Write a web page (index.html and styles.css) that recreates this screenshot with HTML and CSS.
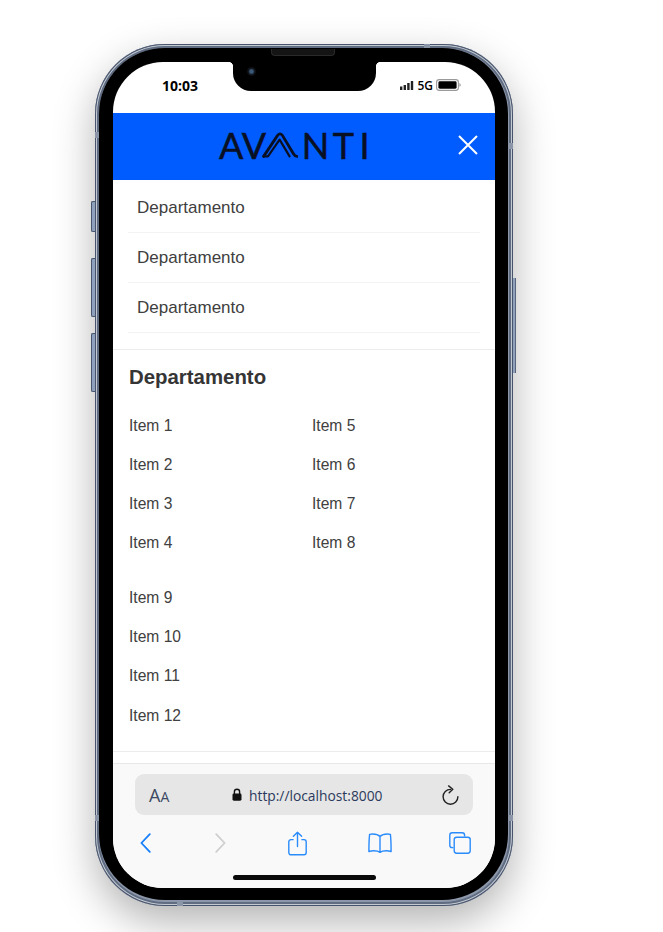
FILE: index.html
```html
<!DOCTYPE html>
<html lang="pt-BR">
<head>
<meta charset="utf-8">
<title>Avanti</title>
<link rel="stylesheet" href="styles.css">
</head>
<body>
<div class="phone">
  <span class="btn btn-mute"></span>
  <span class="btn btn-up"></span>
  <span class="btn btn-down"></span>
  <span class="btn-power"></span>
  <span class="tick tick-top-a"></span>
  <span class="tick tick-bot-a"></span>
  <span class="tick tick-left-a"></span>
  <span class="tick tick-left-b"></span>
  <span class="tick tick-right-a"></span>
  <span class="tick tick-right-b"></span>
  <div class="bezel">
    <span class="speaker"></span>
    <div class="screen">
      <div class="notch"><span class="camera"></span></div>
      <div class="status">
        <span class="time">10:03</span>
        <div class="status-right">
          <svg class="signal" width="14" height="9" viewBox="0 0 14 9"><rect x="0" y="5.5" width="2.4" height="3.5" fill="#222"/><rect x="3.6" y="4" width="2.4" height="5" fill="#222"/><rect x="7.2" y="2" width="2.4" height="7" fill="#222"/><rect x="10.8" y="0" width="2.4" height="9" fill="#222"/></svg>
          <span class="net">5G</span>
          <svg class="battery" width="25" height="12" viewBox="0 0 25 12"><rect x="0.6" y="0.6" width="21.8" height="10.8" rx="2.6" fill="none" stroke="#9a9a9a" stroke-width="1.1"/><rect x="2.4" y="2.3" width="18.2" height="7.4" rx="1.4" fill="#000"/><path d="M23.4 4.2c1 .3 1.3 .9 1.3 1.8s-.3 1.5-1.3 1.8z" fill="#9a9a9a"/></svg>
        </div>
      </div>
      <header class="topbar">
        <div class="logo" role="img" aria-label="AVANTI">
          <span class="logo-text">AV</span>
          <svg class="logo-mark" width="36" height="26" viewBox="0 0 36 26"><path d="M1.6 24.4 L15.6 3.4 Q18 0.4 20.4 3.4 L31.6 22 Q33 24.4 35 24.4" fill="none" stroke="#0a1024" stroke-width="2.8" stroke-linecap="round" stroke-linejoin="round"/><path d="M1.6 24.4 H6 L17.6 7.6 L27.6 24.4" fill="none" stroke="#0a1024" stroke-width="2.2" stroke-linecap="round" stroke-linejoin="round"/></svg>
          <span class="logo-text logo-n">N</span><span class="logo-text logo-t">T</span><span class="logo-text logo-i">I</span>
        </div>
        <svg class="close" width="20" height="20" viewBox="0 0 20 20"><path d="M1 1 L19 19 M19 1 L1 19" stroke="#fff" stroke-width="2" fill="none"/></svg>
      </header>
      <main class="content">
        <ul class="dept-list">
          <li class="dept-row">Departamento</li>
          <li class="dept-row">Departamento</li>
          <li class="dept-row">Departamento</li>
        </ul>
        <section class="dept">
          <h2 class="dept-title">Departamento</h2>
          <div class="items">
            <a class="item">Item 1</a><a class="item">Item 5</a>
            <a class="item">Item 2</a><a class="item">Item 6</a>
            <a class="item">Item 3</a><a class="item">Item 7</a>
            <a class="item">Item 4</a><a class="item">Item 8</a>
          </div>
          <div class="items items-more">
            <a class="item item-wide">Item 9</a>
            <a class="item item-wide">Item 10</a>
            <a class="item item-wide">Item 11</a>
            <a class="item item-wide item-last">Item 12</a>
          </div>
        </section>
      </main>
      <footer class="browser">
        <div class="urlbar">
          <span class="aa"><span class="aa-big">A</span><span class="aa-small">A</span></span>
          <div class="address">
            <svg class="lock" width="10" height="13" viewBox="0 0 10 13"><path d="M2.4 6V3.8a2.6 2.6 0 0 1 5.2 0V6" fill="none" stroke="#111" stroke-width="1.4"/><rect x="0.5" y="5.5" width="9" height="7.2" rx="1.4" fill="#111"/></svg>
            <span class="url">http://localhost:8000</span>
          </div>
          <svg class="reload" width="17" height="20" viewBox="0 0 17 20"><path d="M8.5 4.4A7.4 7.4 0 1 0 15.9 11.8" fill="none" stroke="#222" stroke-width="1.4" stroke-linecap="round"/><path d="M6.6 0.9 L10.8 4.2 L7.2 7.8" fill="none" stroke="#222" stroke-width="1.4" stroke-linecap="round" stroke-linejoin="round"/></svg>
        </div>
        <nav class="toolbar">
          <svg width="11" height="20" viewBox="0 0 11 20"><path d="M9.8 1.2 L1.4 10 L9.8 18.8" fill="none" stroke="#147efb" stroke-width="1.8" stroke-linecap="round" stroke-linejoin="round"/></svg>
          <svg width="11" height="20" viewBox="0 0 11 20"><path d="M1.2 1.2 L9.6 10 L1.2 18.8" fill="none" stroke="#cfcfcf" stroke-width="1.8" stroke-linecap="round" stroke-linejoin="round"/></svg>
          <svg class="share" width="19" height="25" viewBox="0 0 19 25"><path d="M5.6 8.6H3A2.2 2.2 0 0 0 .8 10.8v10.8A2.2 2.2 0 0 0 3 23.8h13a2.2 2.2 0 0 0 2.2-2.2V10.8A2.2 2.2 0 0 0 16 8.6h-2.6" fill="none" stroke="#2a8bfb" stroke-width="1.4"/><path d="M9.5 15.6V1.4M5.4 5.2 9.5 1.2l4.1 4" fill="none" stroke="#2a8bfb" stroke-width="1.4" stroke-linecap="round" stroke-linejoin="round"/></svg>
          <svg class="book" width="24" height="20" viewBox="0 0 24 20"><path d="M12 3.4C10.4 1.8 7.8 1 4.6 1 3.2 1 2.2 1.2 1.6 1.4 1.2 5 .9 13 .9 18.6c1.4-.5 3-.8 4.8-.8 2.6 0 4.8 .4 6.3 1.6 1.5-1.2 3.7-1.6 6.3-1.6 1.8 0 3.4 .3 4.8 .8 0-5.6-.3-13.6-.7-17.2-.6-.2-1.6-.4-3-.4-3.2 0-5.8 .8-7.4 2.4zM12 3.4v16" fill="none" stroke="#2a8bfb" stroke-width="1.4" stroke-linejoin="round"/></svg>
          <svg class="tabs" width="22" height="22" viewBox="0 0 22 22"><path d="M4.4 15.6H3.2A2.4 2.4 0 0 1 .8 13.2V3.2A2.4 2.4 0 0 1 3.2 .8h10a2.4 2.4 0 0 1 2.4 2.4v1.2" fill="none" stroke="#2a8bfb" stroke-width="1.4"/><rect x="5.2" y="5.2" width="16" height="16" rx="2.4" fill="none" stroke="#2a8bfb" stroke-width="1.4"/></svg>
        </nav>
        <span class="home-bar"></span>
      </footer>
    </div>
  </div>
</div>
</body>
</html>
```

FILE: styles.css
```css
* { box-sizing: border-box; }

html, body {
  margin: 0;
  height: 100%;
  background: #fff;
  overflow: hidden;
}

body {
  padding: 44px 0 0 95px;
  font-family: "Liberation Sans", Arial, sans-serif;
  color: #404040;
}

.phone {
  position: relative;
  width: 418px;
  height: 862px;
  padding: 4px 5px 6px 4px;
  border-radius: 70px;
  background: #8c97aa;
  box-shadow:
    inset 0 0 0 1px #46536a,
    inset 0 0 0 2px #c4cad4,
    inset 0 0 0 4px #5f6c82,
    0 16px 42px rgba(0, 0, 0, 0.3);
}

.btn {
  position: absolute;
  left: -4px;
  width: 4px;
  background: #8ea0bb;
  border: 1px solid #47566f;
  border-right: 0;
  border-radius: 2px 0 0 2px;
}
.btn-mute { top: 157px; height: 31px; }
.btn-up { top: 214px; height: 59px; }
.btn-down { top: 289px; height: 59px; }

.btn-power {
  position: absolute;
  right: -3px;
  top: 234px;
  width: 3px;
  height: 95px;
  background: #8ea0bb;
  border-right: 1px solid #56647c;
}

.tick {
  position: absolute;
  background: #8a95a8;
}
.tick-top-a { top: 0; left: 329px; width: 6px; height: 4px; }
.tick-bot-a { bottom: 0; left: 82px; width: 6px; height: 5px; }
.tick-left-a { left: 0; top: 88px; width: 5px; height: 6px; }
.tick-left-b { left: 0; top: 771px; width: 5px; height: 6px; }
.tick-right-a { right: 0; top: 99px; width: 6px; height: 6px; }
.tick-right-b { right: 0; top: 771px; width: 6px; height: 6px; }

.bezel {
  position: relative;
  height: 100%;
  padding: 14px 13px 12px 14px;
  border-radius: 66px;
  background: #000;
}

.speaker {
  position: absolute;
  top: 1px;
  left: 172px;
  width: 64px;
  height: 7px;
  border-radius: 0 0 4px 4px;
  background: #141414;
  border: 1px solid #2a2a2a;
  border-top: 0;
}

.screen {
  position: relative;
  display: flex;
  flex-direction: column;
  height: 100%;
  overflow: hidden;
  border-radius: 50px;
  background: #fff;
}

.notch {
  position: absolute;
  top: 0;
  left: 120px;
  width: 143px;
  height: 29px;
  border-radius: 0 0 18px 18px;
  background: #000;
}

.notch::before,
.notch::after {
  content: "";
  position: absolute;
  top: 0;
  width: 5px;
  height: 5px;
}
.notch::before {
  left: -5px;
  background: radial-gradient(circle at 0 100%, transparent 5px, #000 5.5px);
}
.notch::after {
  right: -5px;
  background: radial-gradient(circle at 100% 100%, transparent 5px, #000 5.5px);
}

.camera {
  position: absolute;
  top: 5px;
  left: 14px;
  width: 9px;
  height: 9px;
  border-radius: 50%;
  background: radial-gradient(circle, #3c5a78 0 25%, #10141c 50%, #050505 100%);
}

.status {
  display: flex;
  justify-content: space-between;
  align-items: center;
  flex: 0 0 51px;
  padding: 0 34px 5px 49px;
}

.time {
  font-family: "Open Sans", sans-serif;
  font-size: 14px;
  font-weight: 700;
  color: #000;
}

.status-right {
  display: flex;
  align-items: center;
  gap: 3px;
}

.net {
  font-family: "Open Sans", sans-serif;
  font-size: 12px;
  font-weight: 600;
  color: #000;
}

.topbar {
  position: relative;
  display: flex;
  justify-content: center;
  align-items: center;
  flex: 0 0 67px;
  background: #005cff;
}

.logo {
  display: flex;
  align-items: center;
  height: 26px;
  margin: -4px 0 0 -19px;
}

.logo-text {
  font-family: Lato, sans-serif;
  font-size: 36px;
  line-height: 26px;
  color: #0a1024;
  letter-spacing: 0.5px;
  -webkit-text-stroke: 0.5px #0a1024;
}

.logo-mark { margin-left: -5px; margin-top: 1px; }
.logo-n { margin-left: 4px; }
.logo-t { margin-left: 3px; }
.logo-i { margin-left: 5px; }

.close {
  position: absolute;
  right: 17px;
  top: 22px;
}

.content {
  flex: 1;
  min-height: 0;
}

.dept-list {
  list-style: none;
  margin: 0;
  padding: 3px 15px 16px;
  border-bottom: 1px solid #ececec;
}

.dept-row {
  height: 50px;
  padding: 0 0 0 9px;
  border-bottom: 1px solid #f3f3f3;
  font-size: 17px;
  line-height: 50px;
}

.dept {
  padding: 0 16px;
  height: 402px;
  border-bottom: 1px solid #ececec;
}

.dept-title {
  margin: 0;
  padding-top: 15px;
  height: 56px;
  font-size: 20.4px;
  line-height: 24px;
  font-weight: 700;
  color: #353535;
}

.items {
  display: grid;
  grid-template-columns: 183px 183px;
}

.items-more { margin-top: 16px; }

.item {
  height: 39px;
  font-size: 15.6px;
  line-height: 39px;
  color: #404040;
}

.item-wide { grid-column: 1 / -1; }
.item-last { line-height: 41px; }

.browser {
  position: relative;
  flex: 0 0 125px;
  padding: 10px 22px 0;
  border-top: 1px solid #e8e8e8;
  background: #f9f9f9;
}

.urlbar {
  display: flex;
  align-items: center;
  height: 41px;
  padding: 0 14px;
  border-radius: 9px;
  background: #e6e6e6;
}

.aa {
  display: flex;
  align-items: baseline;
  width: 83px;
  font-family: "Open Sans", sans-serif;
  color: #3c4a63;
}
.aa-big { font-size: 18px; }
.aa-small { font-size: 14px; }

.address {
  display: flex;
  align-items: center;
  flex: 1;
  gap: 7px;
}

.url {
  padding-top: 1px;
  font-family: "Open Sans", sans-serif;
  font-size: 13.8px;
  color: #2b3a5c;
}

.toolbar {
  display: grid;
  grid-template-columns: 75px 73px 80px 81px auto;
  justify-content: start;
  align-items: center;
  height: 30px;
  margin: 13px 0 0 5px;
}

.home-bar {
  position: absolute;
  left: 120px;
  bottom: 8px;
  width: 143px;
  height: 5px;
  border-radius: 3px;
  background: #0a0a0a;
}
```
